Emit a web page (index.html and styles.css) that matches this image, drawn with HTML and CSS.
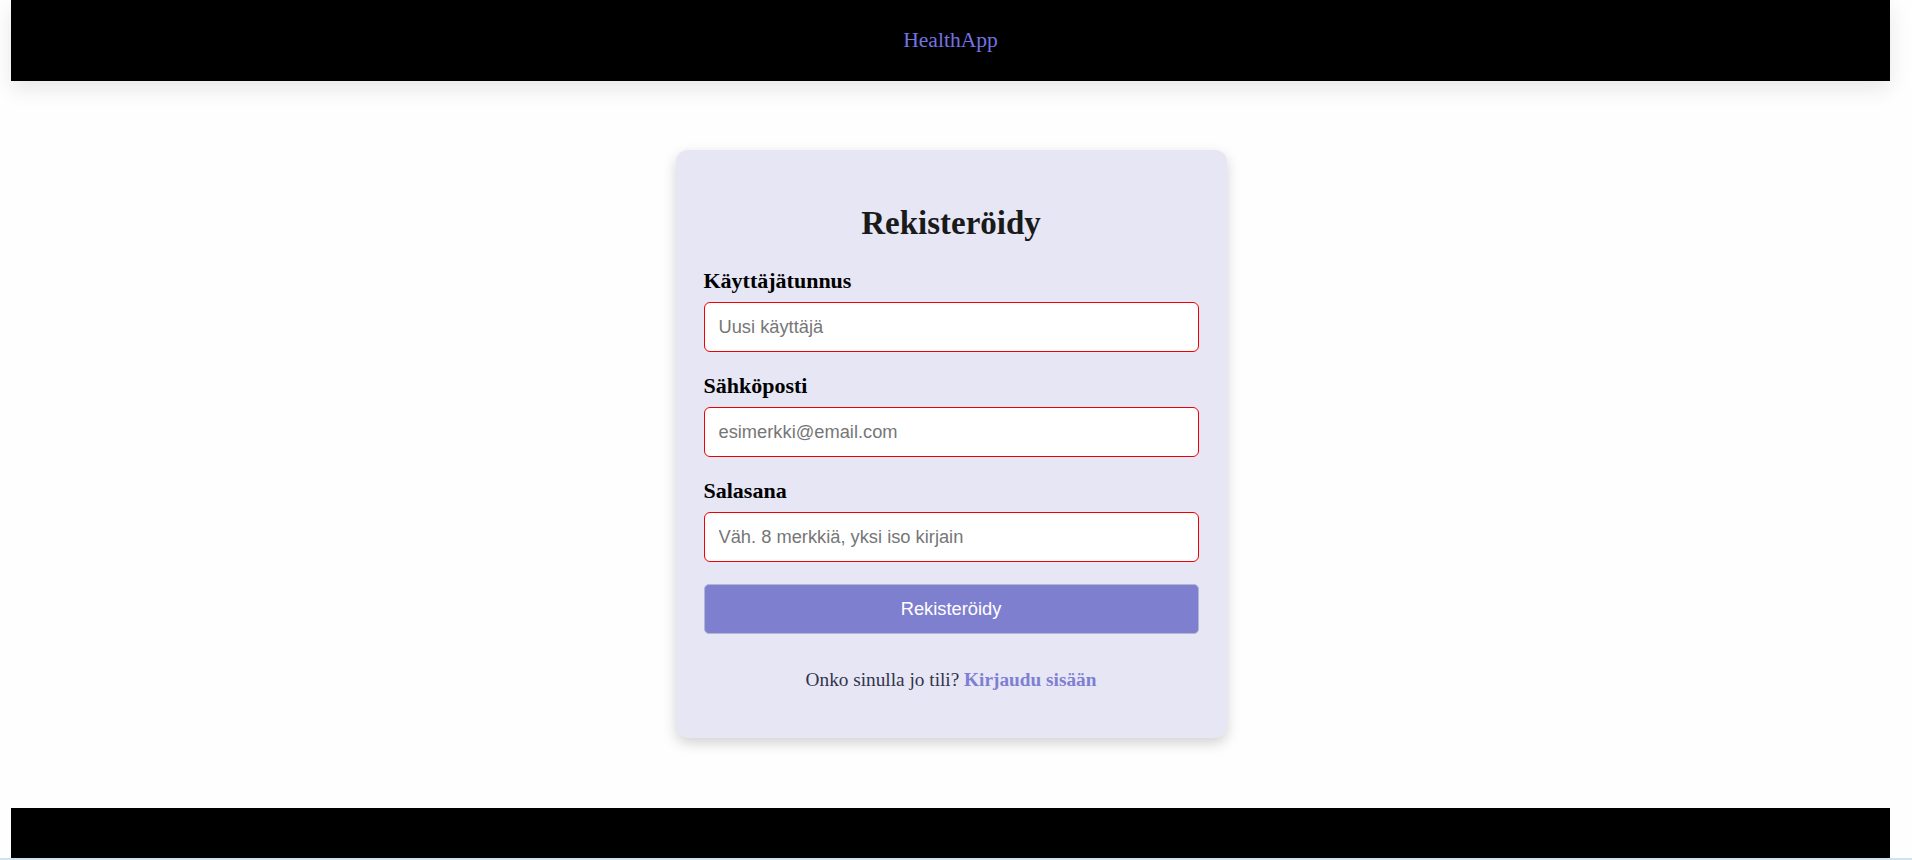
FILE: index.html
```html
<!DOCTYPE html>
<html lang="fi">
<head>
<meta charset="utf-8">
<title>HealthApp – Rekisteröidy</title>
<link rel="stylesheet" href="styles.css">
</head>
<body>
<div class="page">
  <header class="topbar">
    <span class="brand">HealthApp</span>
  </header>
  <main class="main">
    <form class="card">
      <h1 class="card-title">Rekisteröidy</h1>
      <label class="field-label" for="username">Käyttäjätunnus</label>
      <input class="field-input" id="username" type="text" placeholder="Uusi käyttäjä">
      <label class="field-label" for="email">Sähköposti</label>
      <input class="field-input" id="email" type="email" placeholder="esimerkki@email.com">
      <label class="field-label" for="password">Salasana</label>
      <input class="field-input" id="password" type="password" placeholder="Väh. 8 merkkiä, yksi iso kirjain">
      <button class="submit" type="button">Rekisteröidy</button>
      <p class="switch">Onko sinulla jo tili? <a class="switch-link" href="#">Kirjaudu sisään</a></p>
    </form>
  </main>
  <footer class="footer"></footer>
</div>
</body>
</html>
```

FILE: styles.css
```css
html, body {
  margin: 0;
  padding: 0;
  height: 860px;
  overflow: hidden;
  background: #fefefe;
}

.page {
  height: 860px;
  display: flex;
  flex-direction: column;
  padding: 0 22px 0 11px;
  box-sizing: border-box;
  border-bottom: 2px solid #cfe3ee;
}

.topbar {
  height: 81px;
  flex: none;
  background: #000;
  display: flex;
  align-items: center;
  justify-content: center;
  box-shadow: 0 8px 20px rgba(0, 0, 0, 0.09);
  position: relative;
  z-index: 1;
}

.brand {
  font-family: "Liberation Serif", "Times New Roman", serif;
  font-size: 21.6px;
  color: #7373e2;
}

.main {
  flex: 1;
  display: flex;
  justify-content: center;
  align-items: flex-start;
  padding-top: 69px;
}

.card {
  width: 551px;
  box-sizing: border-box;
  padding: 54px 28px 47px 28px;
  margin: 0 0 0 1px;
  background: #e6e6f5;
  border-radius: 12px;
  box-shadow: 0 5px 14px rgba(0, 0, 0, 0.18);
  display: flex;
  flex-direction: column;
}

.card-title {
  margin: 0 0 26px;
  font-family: "Liberation Serif", "Times New Roman", serif;
  font-weight: bold;
  font-size: 33px;
  line-height: 38px;
  text-align: center;
  color: #1a1a1a;
}

.field-label {
  font-family: "Liberation Serif", "Times New Roman", serif;
  font-weight: bold;
  font-size: 22px;
  line-height: 25px;
  color: #000;
  margin-bottom: 9px;
}

.field-input {
  height: 50px;
  box-sizing: border-box;
  border: 1.3px solid #f00000;
  border-radius: 6px;
  background: #fff;
  padding: 0 14px;
  font-family: "Liberation Sans", Arial, sans-serif;
  font-size: 18.3px;
  color: #222;
  margin: 0 0 21px;
  outline: none;
}

.field-input::placeholder {
  color: #767676;
}

.submit {
  margin-top: 1px;
  height: 50px;
  border: 1px solid #b4b4d4;
  border-radius: 5px;
  background: #7f7fd0;
  color: #fff;
  font-family: "Liberation Sans", Arial, sans-serif;
  font-size: 18.3px;
  cursor: pointer;
}

.switch {
  margin: 35px 0 0;
  text-align: center;
  font-family: "Liberation Serif", "Times New Roman", serif;
  font-size: 19.3px;
  line-height: 22px;
  color: #33334a;
}

.switch-link {
  color: #7f7fd2;
  font-weight: bold;
  text-decoration: none;
}

.footer {
  height: 50px;
  flex: none;
  background: #000;
}
```
